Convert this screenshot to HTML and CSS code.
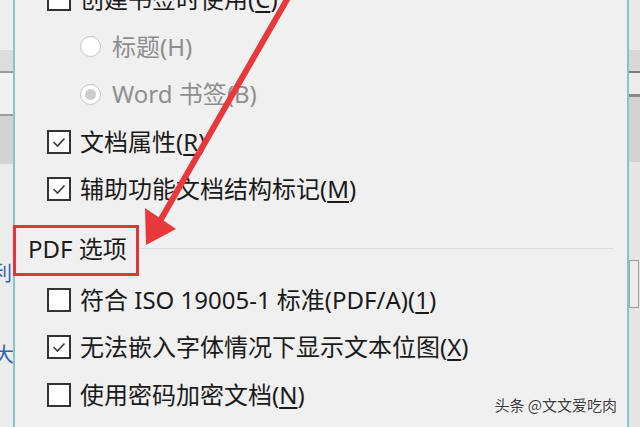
FILE: index.html
```html
<!DOCTYPE html>
<html lang="zh-CN">
<head>
<meta charset="utf-8">
<title>PDF 选项</title>
<link rel="stylesheet" href="styles.css">
</head>
<body>
<div class="screen">
  <div class="side side-left">
    <div class="band b-top"></div>
    <div class="band b-gray1"></div>
    <div class="band b-light"></div>
    <div class="band b-gray2"></div>
    <div class="band b-rest">
      <div class="link-glyph g1">利</div>
      <div class="link-glyph g2">大</div>
    </div>
  </div>

  <div class="panel">
    <div class="row">
      <span class="box"></span>
      <span class="label">创建书签时使用(<u>C</u>)</span>
    </div>
    <div class="row indent">
      <span class="radio"></span>
      <span class="label disabled">标题(H)</span>
    </div>
    <div class="row indent">
      <span class="radio selected"></span>
      <span class="label disabled">Word 书签(B)</span>
    </div>
    <div class="row">
      <span class="box checked"><svg viewBox="0 0 20 20"><path d="M4.5 10 L8.5 14 L15.5 6.5"/></svg></span>
      <span class="label">文档属性(<u>R</u>)</span>
    </div>
    <div class="row">
      <span class="box checked"><svg viewBox="0 0 20 20"><path d="M4.5 10 L8.5 14 L15.5 6.5"/></svg></span>
      <span class="label">辅助功能文档结构标记(<u>M</u>)</span>
    </div>

    <div class="section">
      <span class="section-title">PDF 选项</span>
      <span class="rule"></span>
    </div>

    <div class="row">
      <span class="box"></span>
      <span class="label">符合 ISO 19005-1 标准(PDF/A)(<u>1</u>)</span>
    </div>
    <div class="row">
      <span class="box checked"><svg viewBox="0 0 20 20"><path d="M4.5 10 L8.5 14 L15.5 6.5"/></svg></span>
      <span class="label">无法嵌入字体情况下显示文本位图(<u>X</u>)</span>
    </div>
    <div class="row">
      <span class="box"></span>
      <span class="label">使用密码加密文档(<u>N</u>)</span>
    </div>
  </div>

  <div class="side side-right">
    <div class="band r-top"></div>
    <div class="band r-gray1"></div>
    <div class="band r-light"></div>
    <div class="band r-gray2"></div>
    <div class="band r-mid"></div>
    <div class="band r-box"></div>
    <div class="band r-rest"></div>
  </div>

  <svg class="arrow" viewBox="0 0 640 427" width="640" height="427">
    <line x1="289" y1="-4" x2="160" y2="221"/>
    <polygon points="145,208 176,229 146,245"/>
  </svg>

  <div class="watermark">头条 @文文爱吃肉</div>
</div>
</body>
</html>
```

FILE: styles.css
```css
* { box-sizing: border-box; }

html, body {
  margin: 0;
  padding: 0;
  width: 640px;
  height: 427px;
  overflow: hidden;
  background: #f0f0f0;
}

.screen {
  position: relative;
  display: flex;
  width: 640px;
  height: 427px;
  overflow: hidden;
  font-family: "Noto Sans", "Noto Sans CJK SC", sans-serif;
  color: #1a1a1a;
}

/* side strips */
.side {
  display: flex;
  flex-direction: column;
  flex: none;
  width: 13px;
  overflow: hidden;
}
.band { flex: none; }

.side-left { background: #eeeeee; }
.b-top { height: 50px; background: #efefef; }
.b-gray1 { height: 23px; background: #dddddd; border-bottom: 2px solid #9a9a9a; }
.b-light { height: 43px; background: #f1f1f1; border-bottom: 2px solid #9d9d9d; }
.b-gray2 { height: 48px; background: #d3d3d3; }
.b-rest {
  flex: 1;
  background: #ececec;
  padding-top: 99px;
}
.link-glyph {
  font-family: "Noto Sans CJK SC", sans-serif;
  font-size: 20px;
  line-height: 20px;
  color: #2f5fae;
  margin-left: -8px;
}
.g2 { margin-top: 61px; margin-left: -6px; }

.side-right { background: #e4e4e4; border-left: 2px solid #86c6c8; }
.r-top { height: 50px; background: #e9e9e9; }
.r-gray1 { height: 23px; background: #d8d8d8; border-bottom: 2px solid #7c7c7c; }
.r-light { height: 24px; background: #ececec; border-bottom: 3px solid #8a8a8a; }
.r-gray2 { height: 65px; background: #d2d2d2; }
.r-mid { height: 98px; background: #e6e6e6; }
.r-box { height: 48px; background: #ececec; border: 1px solid #a0a0a0; width: 10px; }
.r-rest { flex: 1; background: #e6e6e6; }

/* main dialog panel */
.panel {
  flex: 1;
  min-width: 0;
  background: #f0f0f0;
  border-left: 2px solid #86c6c8;
  padding-left: 32px;
  margin-top: -24.5px;
  display: flex;
  flex-direction: column;
}

.row {
  display: flex;
  align-items: center;
  height: 47.5px;
  flex: none;
}
.row.indent { padding-left: 33px; }

.box {
  flex: none;
  width: 24px;
  height: 24px;
  border: 2px solid #333333;
  background: #ffffff;
  margin-right: 9px;
  display: flex;
}
.box svg { width: 20px; height: 20px; display: block; }
.box svg path {
  fill: none;
  stroke: #3a3a3a;
  stroke-width: 1.6;
}

.radio {
  flex: none;
  width: 21px;
  height: 21px;
  border-radius: 50%;
  border: 1px solid #c4c4c4;
  background: #ffffff;
  margin-right: 11px;
  display: flex;
  align-items: center;
  justify-content: center;
}
.radio.selected::after {
  content: "";
  width: 11px;
  height: 11px;
  border-radius: 50%;
  background: #cdcdcd;
}

.label {
  font-size: 24px;
  line-height: 30px;
  white-space: nowrap;
}
.label u { text-underline-offset: 3px; text-decoration-thickness: 1.5px; }
.label.disabled { color: #8e8e8e; }

.section {
  display: flex;
  align-items: center;
  flex: none;
  margin-top: 12px;
  margin-left: -34px;
  height: 51px;
}
.section-title {
  flex: none;
  height: 51px;
  border: 3px solid #e2343a;
  padding: 0 9px 3px 12px;
  font-size: 24px;
  line-height: 42px;
  white-space: nowrap;
  color: #1a1a1a;
}
.rule {
  flex: 1;
  height: 1px;
  background: #d9d9d9;
  margin-right: 14px;
  margin-bottom: 4px;
}

/* overlays */
.arrow {
  position: absolute;
  left: 0;
  top: 0;
  pointer-events: none;
}
.arrow line {
  stroke: #e8383c;
  stroke-width: 6;
  stroke-linecap: round;
}
.arrow polygon { fill: #e8383c; }

.watermark {
  position: absolute;
  right: 23px;
  top: 395px;
  font-family: "Noto Sans CJK SC", sans-serif;
  font-size: 15px;
  line-height: 20px;
  color: #3a3a3a;
  text-shadow: 0 0 2px #ffffff, 0 0 2px #ffffff;
  white-space: nowrap;
}
```
